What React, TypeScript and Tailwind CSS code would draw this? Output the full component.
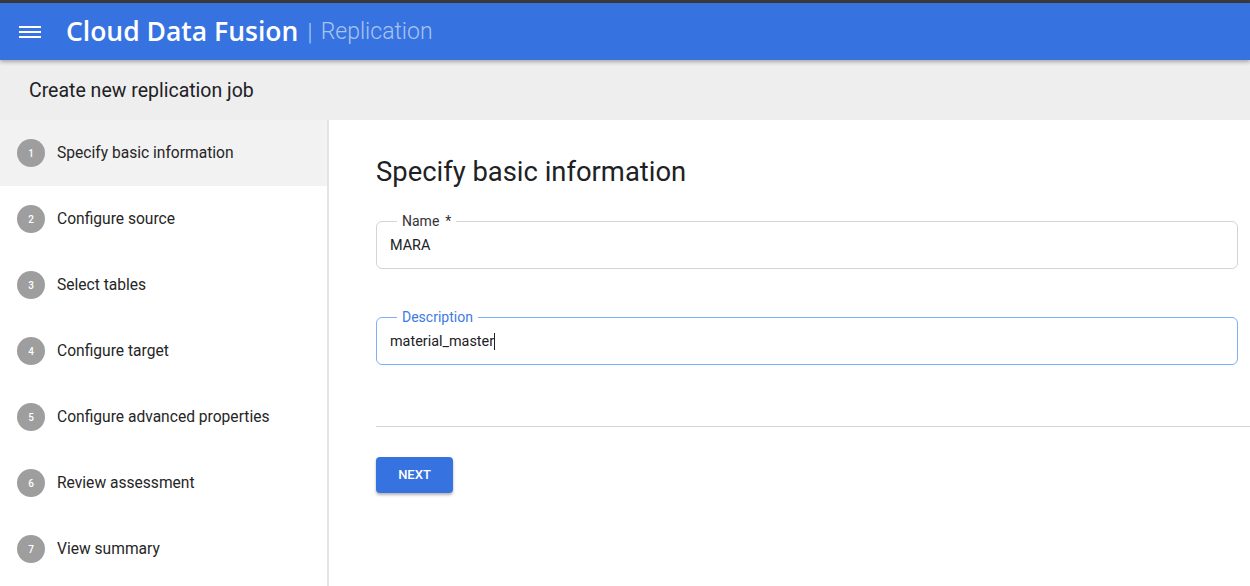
import React from "react";

const steps = [
  "Specify basic information",
  "Configure source",
  "Select tables",
  "Configure target",
  "Configure advanced properties",
  "Review assessment",
  "View summary",
];

export default function App() {
  return (
    <div
      className="w-[1250px] h-[586px] overflow-hidden bg-white flex flex-col"
      style={{ fontFamily: "Roboto, 'Liberation Sans', sans-serif" }}
    >
      <div className="h-[3px] bg-[#3a3a3a] shrink-0" />
      <header className="h-[57px] bg-[#3673e0] flex items-center shrink-0 shadow-[0_2px_4px_rgba(0,0,0,0.3)] relative z-10">
        <svg width="24" height="24" viewBox="0 0 24 24" className="ml-[18px] mr-[24px]">
          <rect x="1" y="6" width="22" height="2" fill="white" />
          <rect x="1" y="11" width="22" height="2" fill="white" />
          <rect x="1" y="16" width="22" height="2" fill="white" />
        </svg>
        <span className="text-white text-[26.5px] font-semibold tracking-normal font-['Open_Sans',sans-serif]">
          Cloud Data Fusion
        </span>
        <span className="text-[#a9c4f1] text-[24px] ml-[9px] mr-[8px] font-light pt-[1px]">|</span>
        <span className="text-[#a9c4f1] text-[23px] font-light pt-[2px]">Replication</span>
      </header>
      <div className="h-[60px] bg-[#eeeeee] flex items-center pl-[29px] shrink-0">
        <span className="text-[19.5px] text-[#202124] pt-[2px]">Create new replication job</span>
      </div>
      <div className="flex flex-1 min-h-0">
        <aside className="w-[329px] shrink-0 border-r-2 border-[#e4e4e4] flex flex-col">
          {steps.map((s, i) => (
            <div
              key={s}
              className={`h-[66px] flex items-center pl-[17px] ${i === 0 ? "bg-[#f2f2f2]" : ""}`}
            >
              <div className="w-[28px] h-[28px] rounded-full bg-[#9e9e9e] flex items-center justify-center text-white text-[10px] font-medium">
                {i + 1}
              </div>
              <span className="ml-[12px] text-[15.6px] text-[#262626] pt-[2px]">{s}</span>
            </div>
          ))}
        </aside>
        <main className="flex-1 pl-[47px] flex flex-col">
          <h1 className="text-[27.4px] text-[#202124] mt-[34px] leading-[36px]">Specify basic information</h1>
          <div className="mt-[31px] mr-[12px] h-[48px] rounded-[6px] border border-[#d4d4d4] flex items-center pl-[13px] relative">
            <span className="absolute left-[20px] top-[-10px] px-[5px] bg-white text-[14px] leading-[18px] text-[#333]">
              Name<span className="ml-[6px]">*</span>
            </span>
            <span className="text-[14.4px] text-[#202124] pt-[1px]">MARA</span>
          </div>
          <div className="mt-[48px] mr-[12px] h-[48px] rounded-[6px] border border-[#7fb0f3] flex items-center pl-[13px] relative">
            <span className="absolute left-[20px] top-[-10px] px-[5px] bg-white text-[14px] leading-[18px] text-[#3b7be3]">
              Description
            </span>
            <span className="text-[14.4px] text-[#202124] pt-[1px]">material_master</span>
            <span className="w-px h-[17px] bg-[#202124]" />
          </div>
          <div className="mt-[61px] h-px bg-[#d4d4d4]" />
          <div className="mt-[30px]">
            <button className="w-[77px] h-[36px] rounded-[4px] bg-[#3673e0] text-white text-[13px] font-medium shadow-[0_2px_3px_rgba(0,0,0,0.3)]">
              NEXT
            </button>
          </div>
        </main>
      </div>
    </div>
  );
}
